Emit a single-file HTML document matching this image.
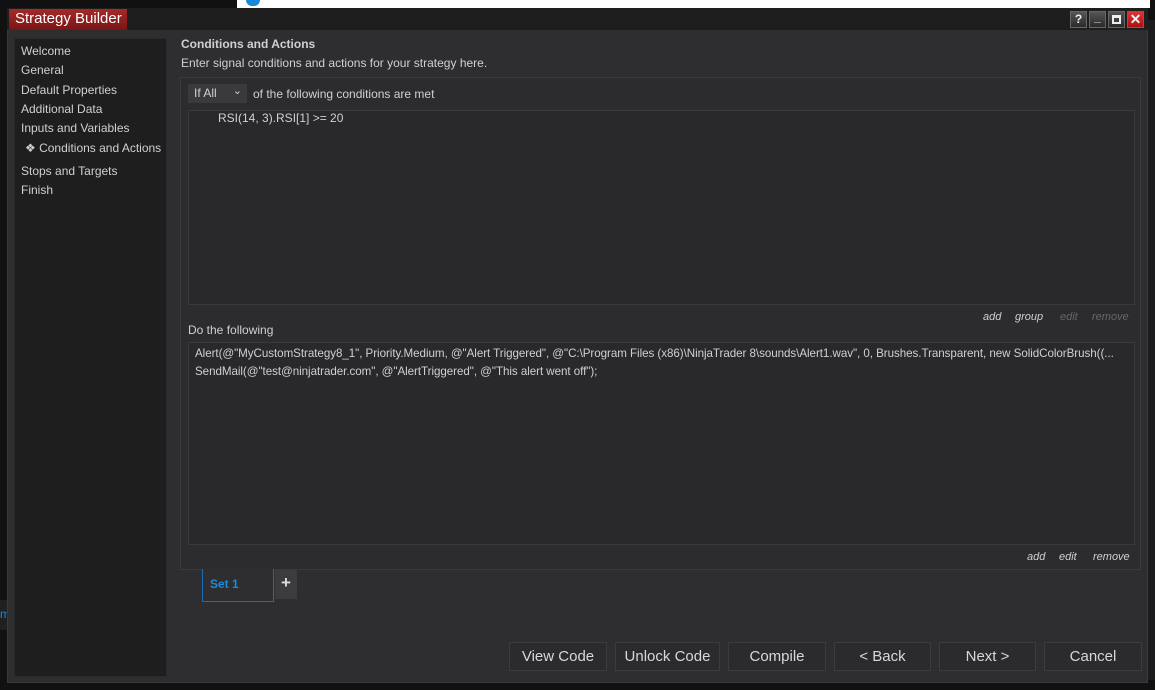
<!DOCTYPE html>
<html><head><style>
*{margin:0;padding:0;box-sizing:border-box}
body{width:1155px;height:690px;background:#111;position:relative;overflow:hidden;font-family:"Liberation Sans",sans-serif;font-size:12px;color:#d0d0d0}
.a{position:absolute}
.btn{position:absolute;top:642px;height:29px;border:1px solid #3c3c40;background:#2b2b2e;color:#d8d8d8;font-size:15px;text-align:center;line-height:27px}
.lnk{position:absolute;font-style:italic;font-size:11px}
.tb{position:absolute;top:11px;width:17px;height:17px;border:1px solid #666;background:linear-gradient(#555,#2a2a2a);color:#eee;font-size:12px;font-weight:bold;text-align:center;line-height:15px}
</style></head><body>
<div class="a" style="left:237px;top:0;width:913px;height:8px;background:#fff"></div>
<div class="a" style="left:246px;top:0;width:14px;height:6px;background:#1a8ad4;border-radius:0 0 6px 6px"></div>
<div class="a" style="left:1148px;top:20px;width:7px;height:660px;background:#1c1c1e"></div>
<div class="a" style="left:0;top:600px;width:7px;height:30px;background:#202020"></div>
<div class="a" style="left:0;top:607px;width:7px;color:#1a8ad4;font-size:12px">m</div>
<div class="a" style="left:7px;top:8px;width:1141px;height:675px;background:#2e2e31;border:1px solid #3a3a3c"></div>
<div class="a" style="left:7px;top:8px;width:1141px;height:22px;background:#1e1e1f"></div>
<div class="a" style="left:9px;top:9px;width:118px;height:21px;background:linear-gradient(#a52a2a,#7a1515);color:#fff;font-size:15px;line-height:20px;padding-left:6px">Strategy Builder</div>
<div class="tb" style="left:1070px">?</div>
<div class="tb" style="left:1089px;line-height:10px">_</div>
<div class="tb" style="left:1108px"><div style="margin:3px;height:9px;border:2px solid #eee;border-top-width:3px"></div></div>
<div class="tb" style="left:1127px;background:linear-gradient(#d33,#a11);font-size:14px">✕</div>
<div class="a" style="left:14px;top:38px;width:153px;height:639px;background:#1e1e1f;border:1px solid #2a2a2c"></div>
<div class="a" style="left:21px;top:42px;line-height:19.3px;font-size:12px">Welcome<br>General<br>Default Properties<br>Additional Data<br>Inputs and Variables</div>
<div class="a" style="left:25px;top:141px">❖ Conditions and Actions</div>
<div class="a" style="left:21px;top:162px;line-height:19px">Stops and Targets<br>Finish</div>
<div class="a" style="left:181px;top:37px;font-weight:bold">Conditions and Actions</div>
<div class="a" style="left:181px;top:56px">Enter signal conditions and actions for your strategy here.</div>
<div class="a" style="left:180px;top:77px;width:961px;height:493px;border:1px solid #3a3a3d;background:#2c2c2f"></div>
<div class="a" style="left:188px;top:84px;width:59px;height:19px;background:#3a3a3d;padding:2px 6px;font-size:12px">If All<span style="position:absolute;right:5px;top:0px;font-size:11px">&#8964;</span></div>
<div class="a" style="left:253px;top:87px">of the following conditions are met</div>
<div class="a" style="left:188px;top:110px;width:947px;height:195px;border:1px solid #3a3a3d;background:#29292c"></div>
<div class="a" style="left:218px;top:111px">RSI(14, 3).RSI[1] &gt;= 20</div>
<div class="lnk" style="left:983px;top:311px">add</div>
<div class="lnk" style="left:1015px;top:311px">group</div>
<div class="lnk" style="left:1060px;top:311px;color:#666">edit</div>
<div class="lnk" style="left:1092px;top:311px;color:#666">remove</div>
<div class="a" style="left:188px;top:323px">Do the following</div>
<div class="a" style="left:188px;top:342px;width:947px;height:203px;border:1px solid #3a3a3d;background:#29292c;overflow:hidden"></div>
<div class="a" style="left:195px;top:345px;width:935px;overflow:hidden;line-height:18px;white-space:nowrap;font-size:11.6px;letter-spacing:-0.05px">Alert(@"MyCustomStrategy8_1", Priority.Medium, @"Alert Triggered", @"C:\Program Files (x86)\NinjaTrader 8\sounds\Alert1.wav", 0, Brushes.Transparent, new SolidColorBrush((...<br>SendMail(@"test@ninjatrader.com", @"AlertTriggered", @"This alert went off");</div>
<div class="lnk" style="left:1027px;top:551px">add</div>
<div class="lnk" style="left:1059px;top:551px">edit</div>
<div class="lnk" style="left:1093px;top:551px">remove</div>
<div class="a" style="left:202px;top:569px;width:72px;height:33px;border:1px solid #1a6fb5;border-top:none;background:#2e2e31;color:#1e8ad8;font-weight:bold;padding:8px 7px">Set 1</div>
<div class="a" style="left:275px;top:570px;width:22px;height:29px;background:#3c3c40;color:#ddd;font-size:17px;font-weight:bold;text-align:center;line-height:26px">+</div>
<div class="btn" style="left:509px;width:98px">View Code</div>
<div class="btn" style="left:615px;width:105px">Unlock Code</div>
<div class="btn" style="left:728px;width:98px">Compile</div>
<div class="btn" style="left:834px;width:97px">&lt; Back</div>
<div class="btn" style="left:939px;width:97px">Next &gt;</div>
<div class="btn" style="left:1044px;width:98px">Cancel</div>
</body></html>
